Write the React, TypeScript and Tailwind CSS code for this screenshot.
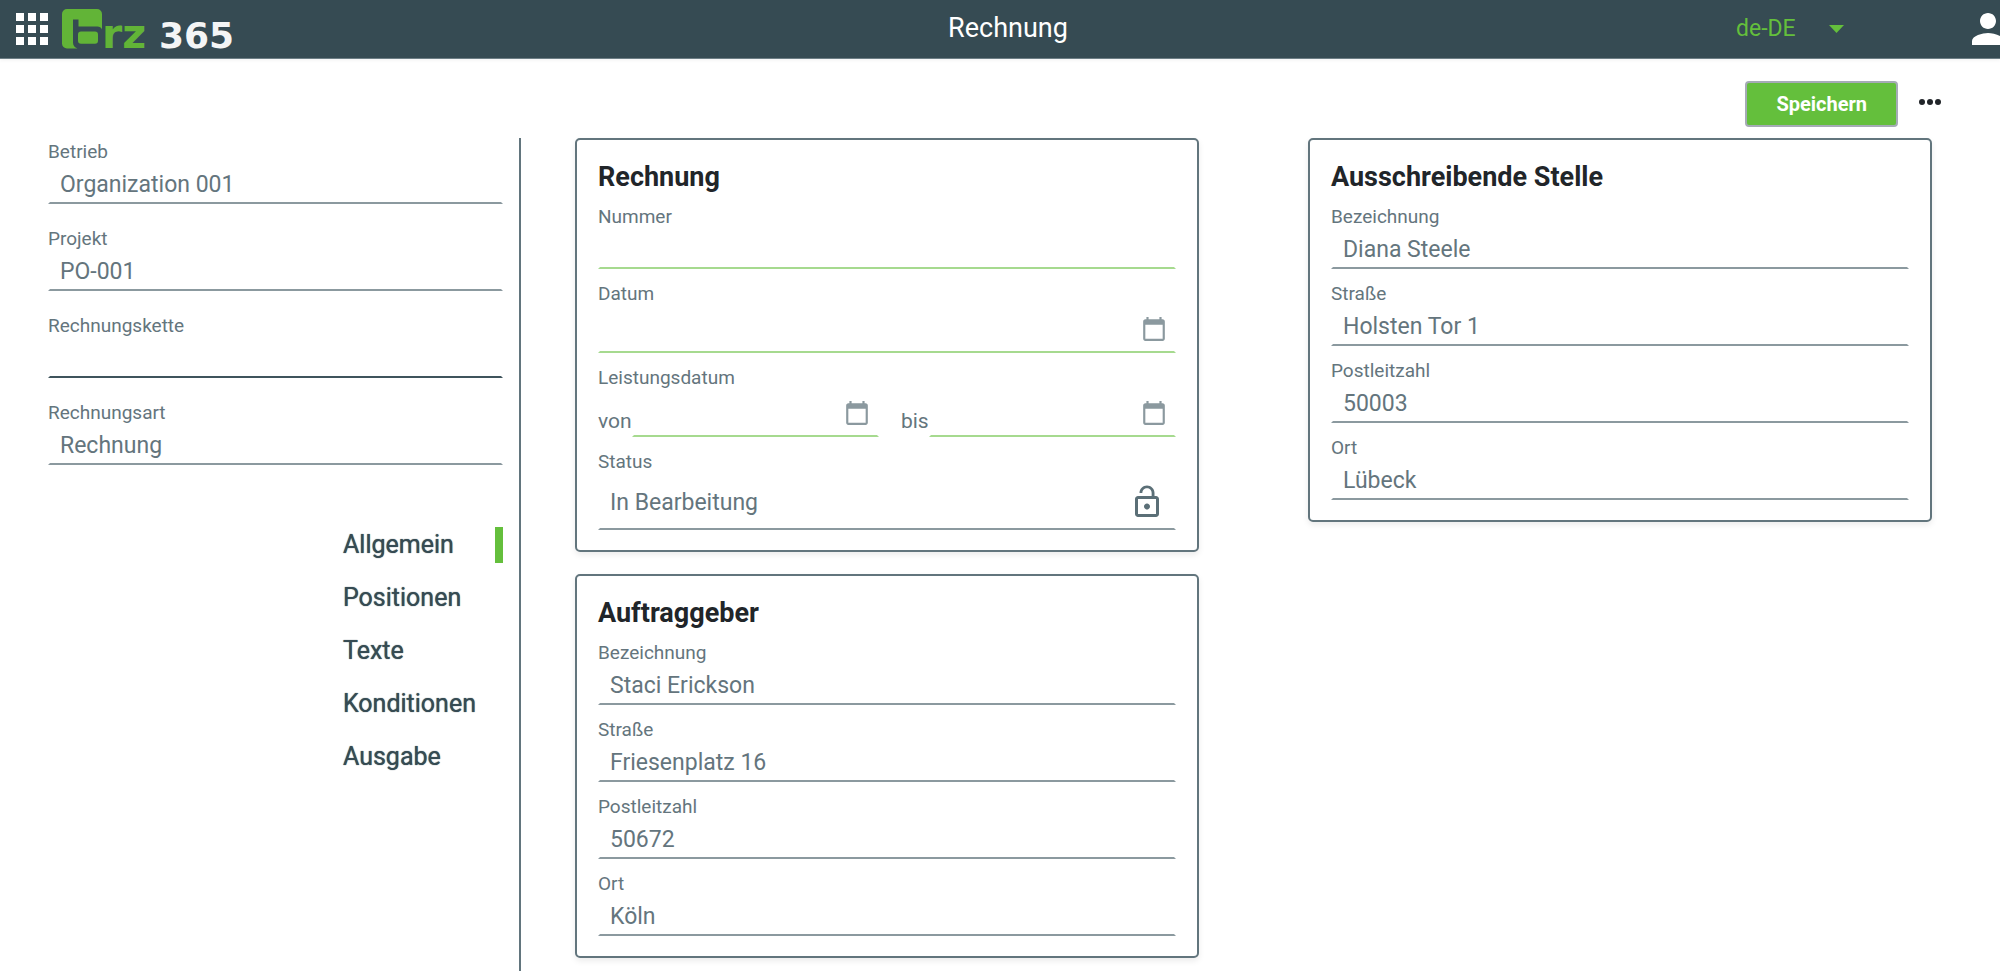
import React, { useId } from "react";

type Tone = "muted" | "strong" | "accent";

const toneClass: Record<Tone, string> = {
  muted: "border-b-[#8b999f]",
  strong: "border-b-[#3f545c]",
  accent: "border-b-[#a6da8f]",
};

const inputBase =
  "block w-full min-w-0 border-2 border-transparent bg-transparent px-[10px] text-[23px] text-[#64757d] outline-none";

const labelClass = "block text-[19px] leading-6 text-[#64757d]";

function Field({ label, value = "", tone = "muted" }: { label: string; value?: string; tone?: Tone }) {
  const id = useId();
  return (
    <div>
      <label htmlFor={id} className={labelClass}>
        {label}
      </label>
      <input id={id} type="text" defaultValue={value} className={`${inputBase} h-10 ${toneClass[tone]}`} />
    </div>
  );
}

function CalendarIcon() {
  return (
    <svg viewBox="0 0 24 24" className="size-[26px] fill-current" aria-hidden="true">
      <path d="M20 3h-1V1h-2v2H7V1H5v2H4c-1.1 0-2 .9-2 2v16c0 1.1.9 2 2 2h16c1.1 0 2-.9 2-2V5c0-1.1-.9-2-2-2zm0 18H4V8h16v13z" />
    </svg>
  );
}

function DateInput({ id }: { id: string }) {
  return (
    <div className="relative min-w-0 flex-1">
      <input id={id} type="text" className={`${inputBase} h-[47px] ${toneClass.accent}`} />
      <button
        type="button"
        aria-label="Kalender öffnen"
        className="absolute top-[10px] right-[9px] text-[#8b999f]"
      >
        <CalendarIcon />
      </button>
    </div>
  );
}

function Card({ title, children }: { title: string; children: React.ReactNode }) {
  return (
    <section className="rounded-[5px] border-2 border-[#62757d] bg-white px-[21px] pt-[21px] pb-5 shadow-[0_3px_6px_rgba(0,0,0,0.08)]">
      <h2 className="mb-3 text-[27px] leading-8 font-bold text-[#212529]">{title}</h2>
      <div className="flex flex-col gap-[13px]">{children}</div>
    </section>
  );
}

function Logo() {
  return (
    <svg viewBox="0 -9 190 58" className="h-[58px] w-[190px]" role="img" aria-label="brz 365">
      <path
        fill="#62b437"
        d="M5 0H35a5 5 0 0 1 5 5V20.5C39 18.5 37.5 17.6 35.5 17.6H16.5V10.5H11V33.5C11 36.5 12.5 38.5 15.5 39.5H5a5 5 0 0 1-5-5V5A5 5 0 0 1 5 0Z"
      />
      <rect x="16" y="22.5" width="20" height="12.2" rx="3" fill="#62b437" />
      <text x="40" y="39" fontSize="41" fontWeight="700" fontFamily="'DejaVu Sans', sans-serif" fill="#62b437">
        rz
      </text>
      <text x="97" y="39" fontSize="36" fontWeight="700" fontFamily="'DejaVu Sans', sans-serif" fill="#f4f5f5">
        365
      </text>
    </svg>
  );
}

function Header() {
  return (
    <header className="grid h-[59px] shrink-0 grid-cols-[1fr_auto_1fr] items-center overflow-hidden border-b border-[#6d7e85] bg-[#364b53] pl-4 shadow-[0_2px_3px_rgba(0,0,0,0.04)]">
      <div className="flex items-center gap-[14px]">
        <button type="button" aria-label="Anwendungen" className="grid grid-cols-3 gap-1">
          {Array.from({ length: 9 }, (_, i) => (
            <span key={i} className="size-2 bg-white" />
          ))}
        </button>
        <Logo />
      </div>
      <h1 className="pb-[3px] text-[27px] leading-8 text-white">Rechnung</h1>
      <div className="-mr-3 flex items-center justify-end gap-[116px]">
        <div className="relative">
          <select
            aria-label="Sprache"
            className="block w-28 appearance-none bg-transparent text-[23px] leading-8 text-[#64bf3c] outline-none"
          >
            <option>de-DE</option>
          </select>
          <svg
            viewBox="0 0 15 8"
            className="pointer-events-none absolute top-3 right-1 h-2 w-[15px] fill-[#64bf3c]"
            aria-hidden="true"
          >
            <path d="M0 0H15L7.5 8Z" />
          </svg>
        </div>
        <button type="button" aria-label="Benutzerkonto" className="text-white">
          <svg viewBox="0 0 24 24" className="size-12 fill-current" aria-hidden="true">
            <path d="M12 12c2.21 0 4-1.79 4-4s-1.79-4-4-4-4 1.79-4 4 1.79 4 4 4zm0 2c-2.67 0-8 1.34-8 4v2h16v-2c0-2.66-5.33-4-8-4z" />
          </svg>
        </button>
      </div>
    </header>
  );
}

const sections = ["Allgemein", "Positionen", "Texte", "Konditionen", "Ausgabe"];

function Sidebar() {
  return (
    <aside className="flex w-[521px] shrink-0 flex-col border-r-2 border-[#62757d] pt-[2px] pr-4 pl-12">
      <div className="flex flex-col gap-[23px]">
        <Field label="Betrieb" value="Organization 001" />
        <Field label="Projekt" value="PO-001" />
        <Field label="Rechnungskette" tone="strong" />
        <Field label="Rechnungsart" value="Rechnung" />
      </div>
      <nav className="mt-[62px] flex w-40 flex-col gap-[17px] self-end">
        {sections.map((name, i) => (
          <a
            key={name}
            href={`#${name.toLowerCase()}`}
            className={`block border-r-8 text-[25px] leading-9 text-[#364b53] [text-shadow:0_0_1px_#364b53] ${
              i === 0 ? "border-[#64bf3c]" : "border-transparent"
            }`}
          >
            {name}
          </a>
        ))}
      </nav>
    </aside>
  );
}

function InvoiceCard() {
  return (
    <Card title="Rechnung">
      <Field label="Nummer" tone="accent" />
      <div>
        <label htmlFor="datum" className={labelClass}>
          Datum
        </label>
        <DateInput id="datum" />
      </div>
      <fieldset>
        <legend className={labelClass}>Leistungsdatum</legend>
        <div className="flex items-end text-[21px] text-[#64757d]">
          <label htmlFor="von" className="leading-8">
            von
          </label>
          <DateInput id="von" />
          <label htmlFor="bis" className="ml-[22px] leading-8">
            bis
          </label>
          <DateInput id="bis" />
        </div>
      </fieldset>
      <div>
        <label htmlFor="status" className={labelClass}>
          Status
        </label>
        <div className="relative">
          <input
            id="status"
            type="text"
            defaultValue="In Bearbeitung"
            className={`${inputBase} h-14 ${toneClass.muted}`}
          />
          <button type="button" aria-label="Sperren" className="absolute top-[10px] right-[11px] text-[#5b6f77]">
            <svg viewBox="0 0 24 24" className="size-9 fill-current" aria-hidden="true">
              <path d="M12 17c1.1 0 2-.9 2-2s-.9-2-2-2-2 .9-2 2 .9 2 2 2zm6-9h-1V6c0-2.76-2.24-5-5-5S7 3.24 7 6h1.9c0-1.71 1.39-3.1 3.1-3.1s3.1 1.39 3.1 3.1v2H6c-1.1 0-2 .9-2 2v10c0 1.1.9 2 2 2h12c1.1 0 2-.9 2-2V10c0-1.1-.9-2-2-2zm0 12H6V10h12v10z" />
            </svg>
          </button>
        </div>
      </div>
    </Card>
  );
}

type Address = { name: string; street: string; zip: string; city: string };

function AddressCard({ title, address }: { title: string; address: Address }) {
  return (
    <Card title={title}>
      <Field label="Bezeichnung" value={address.name} />
      <Field label="Straße" value={address.street} />
      <Field label="Postleitzahl" value={address.zip} />
      <Field label="Ort" value={address.city} />
    </Card>
  );
}

export default function App() {
  return (
    <div className="flex min-h-screen flex-col bg-white font-[Roboto,sans-serif]">
      <Header />
      <div className="flex shrink-0 items-start justify-end gap-[21px] pt-[22px] pr-[59px] pb-[11px]">
        <button
          type="button"
          className="h-[46px] rounded-[4px] border-2 border-[#a5abb5] bg-[#64bf3c] px-[29px] text-[20px] font-bold text-white"
        >
          Speichern
        </button>
        <button type="button" aria-label="Weitere Aktionen" className="flex gap-[2px] pt-[18px]">
          <span className="size-[6px] rounded-full bg-[#212529]" />
          <span className="size-[6px] rounded-full bg-[#212529]" />
          <span className="size-[6px] rounded-full bg-[#212529]" />
        </button>
      </div>
      <div className="flex flex-1">
        <Sidebar />
        <main className="flex flex-1 items-start gap-[109px] pr-[68px] pl-[54px]">
          <div className="flex min-w-0 flex-1 flex-col gap-[22px]">
            <InvoiceCard />
            <AddressCard
              title="Auftraggeber"
              address={{ name: "Staci Erickson", street: "Friesenplatz 16", zip: "50672", city: "Köln" }}
            />
          </div>
          <div className="min-w-0 flex-1">
            <AddressCard
              title="Ausschreibende Stelle"
              address={{ name: "Diana Steele", street: "Holsten Tor 1", zip: "50003", city: "Lübeck" }}
            />
          </div>
        </main>
      </div>
    </div>
  );
}
